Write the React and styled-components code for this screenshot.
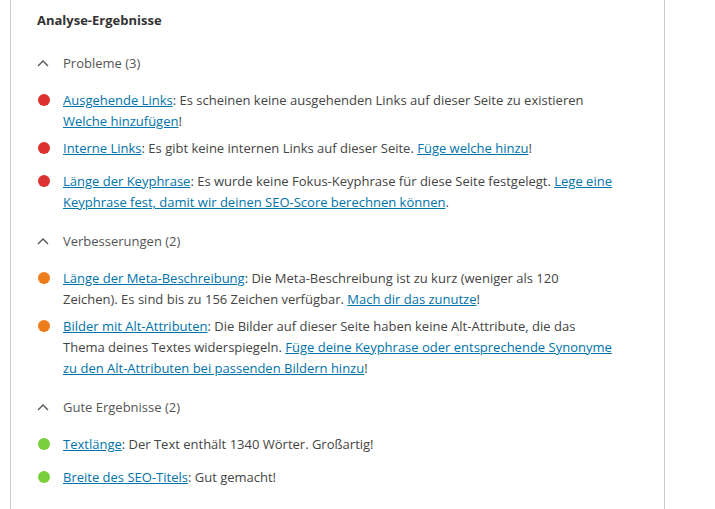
import styled, { createGlobalStyle } from 'styled-components';

const GlobalStyle = createGlobalStyle`
  body {
    margin: 0;
    background: #fff;
    font-family: "Open Sans", "Noto Sans", sans-serif;
    color: #444;
  }
`;

const Panel = styled.section`
  margin-left: 10px;
  width: 655px;
  min-height: 509px;
  box-sizing: border-box;
  border-left: 1px solid #ccc;
  border-right: 1px solid #ccc;
  padding: 10px 24px 0 26px;
`;

const Title = styled.h2`
  margin: 0 0 11px;
  font-size: 13px;
  line-height: 20px;
  font-weight: 700;
  color: #333;
`;

const Section = styled.div``;

const SectionToggle = styled.button`
  display: flex;
  align-items: center;
  gap: 14px;
  width: 100%;
  height: 43px;
  padding: 0;
  border: 0;
  background: none;
  font: inherit;
  font-size: 13px;
  color: #555;
  cursor: pointer;
  text-align: left;
`;

const List = styled.ul`
  list-style: none;
  margin: 6px 0 0;
  padding: 0;
`;

const Item = styled.li`
  display: flex;
  gap: 13px;
  min-height: 27px;
  margin-bottom: 6px;
  font-size: 13px;
  line-height: 21px;
`;

const Bullet = styled.span`
  flex: none;
  width: 12px;
  height: 12px;
  margin: 4px 0 0 1px;
  border-radius: 50%;
  background: ${(p) => p.$color};
`;

const Text = styled.p`
  margin: 0;
  max-width: 551px;
`;

const Link = styled.a`
  color: #0073aa;
  text-decoration: underline;
`;

const Chevron = () => (
  <svg width="12" height="8" viewBox="0 0 12 8" fill="none" stroke="#555" strokeWidth="1.4">
    <path d="M1 7 L6 2 L11 7" />
  </svg>
);

const colors = { bad: '#dc3232', ok: '#ee7c1b', good: '#7ad03a' };

const sections = [
  {
    title: 'Probleme (3)',
    type: 'bad',
    items: [
      [['Ausgehende Links', true], [': Es scheinen keine ausgehenden Links auf dieser Seite zu existieren '], ['Welche hinzufügen', true], ['!']],
      [['Interne Links', true], [': Es gibt keine internen Links auf dieser Seite. '], ['Füge welche hinzu', true], ['!']],
      [['Länge der Keyphrase', true], [': Es wurde keine Fokus-Keyphrase für diese Seite festgelegt. '], ['Lege eine Keyphrase fest, damit wir deinen SEO-Score berechnen können', true], ['.']],
    ],
  },
  {
    title: 'Verbesserungen (2)',
    type: 'ok',
    items: [
      [['Länge der Meta-Beschreibung', true], [': Die Meta-Beschreibung ist zu kurz (weniger als 120 Zeichen). Es sind bis zu 156 Zeichen verfügbar. '], ['Mach dir das zunutze', true], ['!']],
      [['Bilder mit Alt-Attributen', true], [': Die Bilder auf dieser Seite haben keine Alt-Attribute, die das Thema deines Textes widerspiegeln. '], ['Füge deine Keyphrase oder entsprechende Synonyme zu den Alt-Attributen bei passenden Bildern hinzu', true], ['!']],
    ],
  },
  {
    title: 'Gute Ergebnisse (2)',
    type: 'good',
    items: [
      [['Textlänge', true], [': Der Text enthält 1340 Wörter. Großartig!']],
      [['Breite des SEO-Titels', true], [': Gut gemacht!']],
    ],
  },
];

export default function App() {
  return (
    <>
      <GlobalStyle />
      <Panel>
        <Title>Analyse-Ergebnisse</Title>
        {sections.map((s) => (
          <Section key={s.title}>
            <SectionToggle>
              <Chevron />
              {s.title}
            </SectionToggle>
            <List>
              {s.items.map((parts, i) => (
                <Item key={i}>
                  <Bullet $color={colors[s.type]} />
                  <Text>
                    {parts.map(([t, isLink], j) =>
                      isLink ? (
                        <Link key={j} href="#">
                          {t}
                        </Link>
                      ) : (
                        <span key={j}>{t}</span>
                      )
                    )}
                  </Text>
                </Item>
              ))}
            </List>
          </Section>
        ))}
      </Panel>
    </>
  );
}
